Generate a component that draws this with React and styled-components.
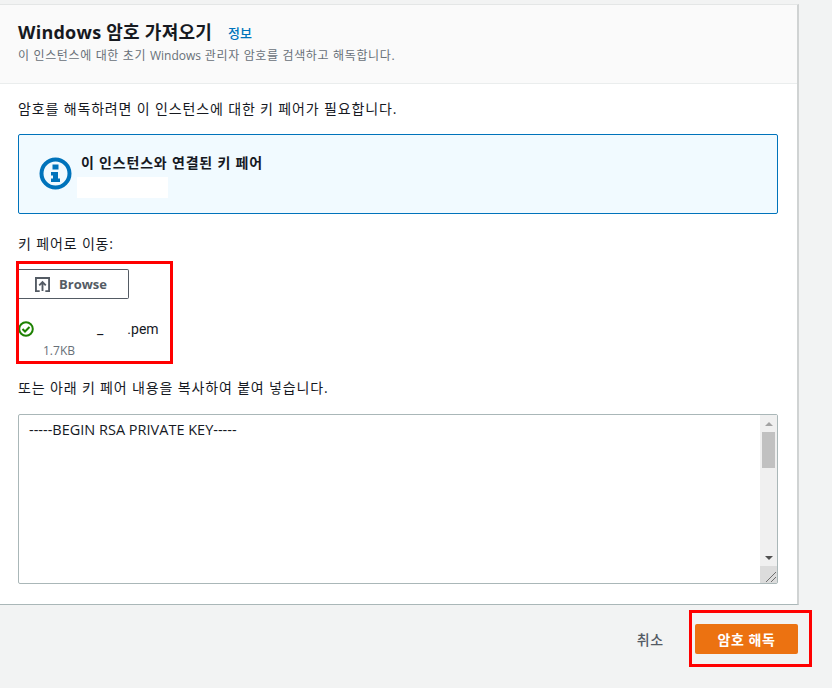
import React from 'react'
import styled, { createGlobalStyle } from 'styled-components'

const GlobalStyle = createGlobalStyle`
  html, body {
    margin: 0;
    padding: 0;
    background: #f2f3f3;
  }
  body {
    font-family: 'Open Sans', 'Noto Sans CJK KR', sans-serif;
    color: #16191f;
  }
`

const Page = styled.div`
  position: relative;
  width: 832px;
  height: 688px;
  padding-top: 4px;
  box-sizing: border-box;
  overflow: hidden;
`

const Card = styled.section`
  width: 799px;
  height: 601px;
  background: #fff;
  border-top: 1px solid #e4e6e6;
  border-right: 2px solid #d0d3d3;
  border-bottom: 1px solid #aab7b8;
  box-sizing: border-box;
  display: flex;
  flex-direction: column;
`

const Header = styled.header`
  height: 79px;
  padding: 15px 18px 0;
  background: #fafafa;
  border-bottom: 1px solid #eaeded;
  box-sizing: border-box;
`

const TitleRow = styled.div`
  display: flex;
  align-items: center;
  gap: 16px;
  height: 24px;
`

const Title = styled.h1`
  margin: 0;
  font-size: 18px;
  line-height: 24px;
  font-weight: 700;
  letter-spacing: 0.25px;
`

const InfoLink = styled.a`
  font-size: 13px;
  line-height: 24px;
  font-weight: 500;
  color: #0073bb;
  padding-top: 2px;
`

const Subtitle = styled.p`
  margin: 3px 0 0;
  font-size: 12px;
  line-height: 18px;
  letter-spacing: 0.65px;
  color: #687078;
`

const Latin = styled.span`
  letter-spacing: 0;
`

const Body = styled.div`
  padding: 15px 19px 0 18px;
  display: flex;
  flex-direction: column;
`

const Text = styled.p`
  margin: 0;
  font-size: 14px;
  line-height: 20px;
  letter-spacing: 0.85px;
  color: #16191f;
`

const Notice = styled.div`
  margin-top: 15px;
  height: 80px;
  padding: 20px 20px 0;
  background: #f1faff;
  border: 1px solid #0073bb;
  border-radius: 2px;
  box-sizing: border-box;
  display: flex;
  gap: 9px;
`

const NoticeIcon = styled.svg`
  width: 33px;
  height: 33px;
  margin-top: 2px;
  flex: none;
`

const NoticeText = styled.div`
  display: flex;
  flex-direction: column;
  margin-top: -2px;
`

const NoticeTitle = styled.strong`
  font-size: 14px;
  line-height: 20px;
  font-weight: 700;
  letter-spacing: 0.8px;
`

const NoticeBlank = styled.div`
  width: 91px;
  height: 21px;
  margin: 4px 0 0 -4px;
  background: #fff;
`

const Label = styled(Text)`
  margin-top: 20px;
`

const BrowseButton = styled.button`
  width: 111px;
  height: 30px;
  margin-top: 15px;
  padding: 0 0 0 17px;
  background: #fff;
  border: 1px solid #545b64;
  border-left: 0;
  border-radius: 0 2px 2px 0;
  box-sizing: border-box;
  display: flex;
  align-items: center;
  gap: 9px;
  font-family: inherit;
  font-size: 13px;
  font-weight: 700;
  color: #545b64;
`

const FileRow = styled.div`
  display: flex;
  align-items: center;
  margin-top: 20px;
  height: 20px;
`

const FileName = styled.span`
  margin-left: 9px;
  font-family: Roboto, sans-serif;
  font-size: 14px;
  line-height: 20px;
  color: #16191f;
  display: flex;
  align-items: baseline;
`

const Gap = styled.span`
  display: inline-block;
  width: ${p => p.$w}px;
`

const FileSize = styled.div`
  margin: 4px 0 0 25px;
  font-size: 12px;
  line-height: 16px;
  color: #687078;
`

const CopyLabel = styled(Text)`
  margin-top: 19px;
`

const KeyBox = styled.div`
  margin-top: 16px;
  height: 170px;
  background: #fff;
  border: 1px solid #aab7b8;
  border-radius: 2px;
  box-sizing: border-box;
  display: flex;
`

const KeyText = styled.div`
  flex: 1;
  padding: 5px 10px;
  font-size: 14.5px;
  line-height: 20px;
  color: #16191f;
`

const ScrollTrack = styled.div`
  width: 17px;
  background: #f0f0f0;
  display: flex;
  flex-direction: column;
  align-items: center;
`

const ScrollArrow = styled.div`
  height: 17px;
  width: 17px;
  flex: none;
  display: flex;
  align-items: center;
  justify-content: center;
  &::before {
    content: '';
    border-left: 4px solid transparent;
    border-right: 4px solid transparent;
    ${p => (p.$down
      ? 'border-top: 4px solid #505050;'
      : 'border-bottom: 4px solid #a3a3a3;')}
  }
`

const ScrollThumb = styled.div`
  width: 13px;
  height: 36px;
  background: #c1c1c1;
  flex: none;
`

const ScrollSpace = styled.div`
  flex: 1;
`

const Corner = styled.div`
  height: 17px;
  width: 17px;
  flex: none;
  background: #dcdcdc;
  display: flex;
`

const Footer = styled.footer`
  width: 798px;
  height: 66px;
  padding-top: 1px;
  box-sizing: border-box;
  display: flex;
  align-items: center;
  justify-content: flex-end;
  gap: 31px;
`

const CancelButton = styled.button`
  padding: 0;
  background: none;
  border: 0;
  font-family: inherit;
  font-size: 14px;
  font-weight: 500;
  letter-spacing: 0.8px;
  color: #545b64;
`

const PrimaryButton = styled.button`
  width: 103px;
  height: 30px;
  padding: 0;
  background: #ec7211;
  border: 0;
  border-radius: 2px;
  font-family: inherit;
  font-size: 14px;
  font-weight: 700;
  letter-spacing: 0.6px;
  color: #fff;
`

const Highlight = styled.div`
  position: absolute;
  left: ${p => p.$x}px;
  top: ${p => p.$y}px;
  width: ${p => p.$w}px;
  height: ${p => p.$h}px;
  border: 3px solid #ff0000;
  box-sizing: border-box;
  pointer-events: none;
`

const InfoIcon = () => (
  <NoticeIcon viewBox="0 0 33 33">
    <circle cx="16.5" cy="16.5" r="14" fill="none" stroke="#0073bb" strokeWidth="4" />
    <rect x="13.5" y="7.500" width="6" height="5" fill="#0073bb" />
    <path d="M12 15h7v6.500h2V25h-9v-3.500h2v-3h-2z" fill="#0073bb" />
  </NoticeIcon>
)

const UploadIcon = () => (
  <svg width="15" height="15" viewBox="0 0 16 16" fill="none" stroke="#545b64" strokeWidth="2">
    <path d="M5 15H1V1h14v14h-4" />
    <path d="M8 15V6M4.500 9L8 5.500 11.500 9" />
  </svg>
)

const CheckIcon = () => (
  <svg width="16" height="16" viewBox="0 0 16 16" fill="none" stroke="#1d8102" strokeWidth="2">
    <circle cx="8" cy="8" r="6.800" />
    <path d="M4.500 8l2.500 2.500 4.500-4.500" />
  </svg>
)

const ResizeGrip = () => (
  <svg width="17" height="17" viewBox="0 0 17 17" stroke="#6e6e6e" strokeWidth="1">
    <path d="M6 16L16 6M11 16l5-5" />
  </svg>
)

export default function App() {
  return (
    <Page>
      <GlobalStyle />
      <Card>
        <Header>
          <TitleRow>
            <Title>Windows 암호 가져오기</Title>
            <InfoLink>정보</InfoLink>
          </TitleRow>
          <Subtitle>
            이 인스턴스에 대한 초기 <Latin>Windows</Latin> 관리자 암호를 검색하고 해독합니다.
          </Subtitle>
        </Header>
        <Body>
          <Text>암호를 해독하려면 이 인스턴스에 대한 키 페어가 필요합니다.</Text>
          <Notice>
            <InfoIcon />
            <NoticeText>
              <NoticeTitle>이 인스턴스와 연결된 키 페어</NoticeTitle>
              <NoticeBlank />
            </NoticeText>
          </Notice>
          <Label>키 페어로 이동:</Label>
          <BrowseButton>
            <UploadIcon />
            Browse
          </BrowseButton>
          <FileRow>
            <CheckIcon />
            <FileName>
              <Gap $w={54} />_<Gap $w={24} />.pem
            </FileName>
          </FileRow>
          <FileSize>1.7KB</FileSize>
          <CopyLabel>또는 아래 키 페어 내용을 복사하여 붙여 넣습니다.</CopyLabel>
          <KeyBox>
            <KeyText>-----BEGIN RSA PRIVATE KEY-----</KeyText>
            <ScrollTrack>
              <ScrollArrow />
              <ScrollThumb />
              <ScrollSpace />
              <ScrollArrow $down />
              <Corner>
                <ResizeGrip />
              </Corner>
            </ScrollTrack>
          </KeyBox>
        </Body>
      </Card>
      <Footer>
        <CancelButton>취소</CancelButton>
        <PrimaryButton>암호 해독</PrimaryButton>
      </Footer>
      <Highlight $x={16} $y={261} $w={157} $h={103} />
      <Highlight $x={689} $y={610} $w={123} $h={57} />
    </Page>
  )
}
